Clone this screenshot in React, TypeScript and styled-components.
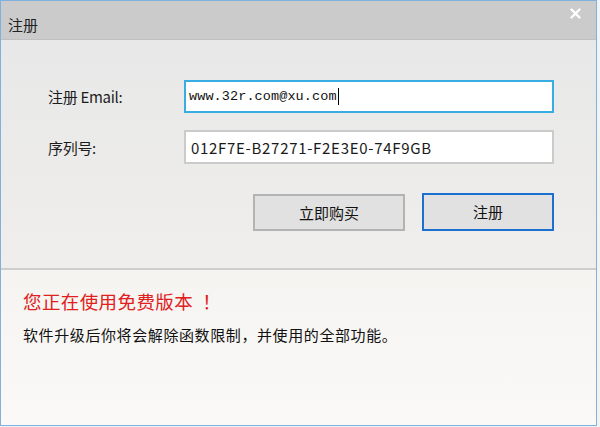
import React from "react";
import styled, { createGlobalStyle } from "styled-components";

const Global = createGlobalStyle`
  html, body { margin: 0; padding: 0; background: #f3f3f3; }
  body { font-family: "Noto Sans CJK SC", "Noto Sans", sans-serif; }
  * { box-sizing: border-box; }
`;

const Window = styled.div`
  width: 597px;
  height: 426px;
  border: 1px solid #7eb0e0;
  display: flex;
  flex-direction: column;
  background: #f7f6f3;
  overflow: hidden;
`;

const TitleBar = styled.div`
  height: 39px;
  flex: none;
  background: #cbcbcb;
  display: flex;
  justify-content: space-between;
  align-items: flex-start;
  padding: 13px 15px 0 7px;
  border-bottom: 1px solid #c0c0c0;
`;

const Title = styled.span`
  font-size: 15px;
  line-height: 22px;
  color: #222;
`;

const Close = styled.span`
  display: flex;
  margin-top: -6px;
`;

const Top = styled.div`
  height: 230px;
  flex: none;
  background: linear-gradient(#e8e8e8, #efeeec);
  border-bottom: 2px solid #cdcdcb;
  padding: 40px 42px 0 47px;
  display: flex;
  flex-direction: column;
`;

const Row = styled.div<{ $gap?: number }>`
  display: flex;
  align-items: center;
  margin-bottom: ${(p) => p.$gap ?? 0}px;
`;

const Label = styled.span`
  width: 136px;
  font-size: 15px;
  color: #1c1c1c;
  letter-spacing: -0.3px;
`;

const Field = styled.div<{ $focus?: boolean }>`
  width: 370px;
  height: ${(p) => (p.$focus ? 33 : 34)}px;
  background: #fff;
  border: 2px solid ${(p) => (p.$focus ? "#38ade3" : "#cbcbcb")};
  display: flex;
  align-items: center;
  padding-left: ${(p) => (p.$focus ? 3 : 5)}px;
`;

const MonoText = styled.span`
  font-family: "Liberation Mono", "DejaVu Sans Mono", monospace;
  font-size: 13.5px;
  color: #111;
  letter-spacing: 0.1px;
`;

const Caret = styled.span`
  width: 1px;
  height: 17px;
  background: #000;
  margin-left: 1px;
`;

const SerialText = styled.span`
  font-size: 15px;
  color: #1a1a1a;
  letter-spacing: 0.7px;
`;

const Buttons = styled.div`
  display: flex;
  justify-content: flex-end;
  align-items: center;
  gap: 17px;
`;

const Button = styled.button<{ $primary?: boolean; $w: number }>`
  width: ${(p) => p.$w}px;
  height: ${(p) => (p.$primary ? 38 : 37)}px;
  background: #e1e1e1;
  border: 2px solid ${(p) => (p.$primary ? "#1d6fd2" : "#b3b3b3")};
  font-family: "Noto Sans CJK SC", sans-serif;
  font-size: 15px;
  color: #111;
  padding: 0;
  margin-top: ${(p) => (p.$primary ? 0 : 2)}px;
`;

const Bottom = styled.div`
  flex: 1;
  background: linear-gradient(#f5f4f1, #faf9f7);
  padding: 18px 0 0 22px;
  display: flex;
  flex-direction: column;
`;

const Warn = styled.div`
  font-size: 18.5px;
  color: #e0201c;
  line-height: 26px;
  letter-spacing: 0.4px;
`;

const Info = styled.div`
  font-size: 15px;
  color: #111;
  margin-top: 10px;
  line-height: 22px;
  letter-spacing: 0.6px;
`;

export default function App() {
  return (
    <>
      <Global />
      <Window>
        <TitleBar>
          <Title>注册</Title>
          <Close>
            <svg width="11" height="11" viewBox="0 0 11 11">
              <path d="M1.5 1.5 L9.5 9.5 M9.5 1.5 L1.5 9.5" stroke="#fff" strokeWidth="2.4" strokeLinecap="round" />
            </svg>
          </Close>
        </TitleBar>
        <Top>
          <Row $gap={17}>
            <Label>注册 Email:</Label>
            <Field $focus>
              <MonoText>www.32r.com@xu.com</MonoText>
              <Caret />
            </Field>
          </Row>
          <Row $gap={28}>
            <Label>序列号:</Label>
            <Field>
              <SerialText>012F7E-B27271-F2E3E0-74F9GB</SerialText>
            </Field>
          </Row>
          <Buttons>
            <Button $w={152}>立即购买</Button>
            <Button $w={132} $primary>注册</Button>
          </Buttons>
        </Top>
        <Bottom>
          <Warn>您正在使用免费版本&nbsp;&nbsp;！</Warn>
          <Info>软件升级后你将会解除函数限制，并使用的全部功能。</Info>
        </Bottom>
      </Window>
    </>
  );
}
